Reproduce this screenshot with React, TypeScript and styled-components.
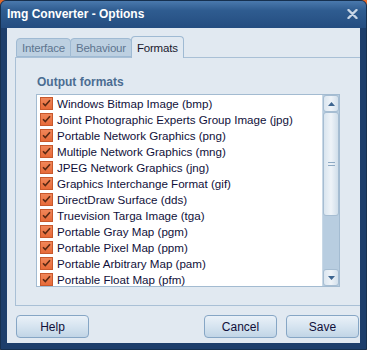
import styled, { createGlobalStyle } from "styled-components";

const GlobalStyle = createGlobalStyle`
  html, body {
    margin: 0;
    padding: 0;
    background: #e0692c;
  }
  * {
    box-sizing: border-box;
  }
`;

const formats = [
  "Windows Bitmap Image (bmp)",
  "Joint Photographic Experts Group Image (jpg)",
  "Portable Network Graphics (png)",
  "Multiple Network Graphics (mng)",
  "JPEG Network Graphics (jng)",
  "Graphics Interchange Format (gif)",
  "DirectDraw Surface (dds)",
  "Truevision Targa Image (tga)",
  "Portable Gray Map (pgm)",
  "Portable Pixel Map (ppm)",
  "Portable Arbitrary Map (pam)",
  "Portable Float Map (pfm)",
];

const Window = styled.div`
  width: 367px;
  height: 350px;
  display: flex;
  flex-direction: column;
  background: #1d3e6b;
  border-radius: 6px 6px 0 0;
  border: 1px solid #16304f;
  overflow: hidden;
  font-family: "Liberation Sans", Arial, sans-serif;
`;

const TitleBar = styled.div`
  height: 27px;
  flex: none;
  display: flex;
  align-items: center;
  justify-content: space-between;
  padding: 0 8px 1px 6px;
  background: linear-gradient(#4a79ad 0%, #2f5c90 35%, #244d80 100%);
`;

const Title = styled.span`
  color: #ffffff;
  font-weight: bold;
  font-size: 12px;
`;

const Client = styled.div`
  flex: 1;
  margin: 0 6px 6px 6px;
  background: #e1e9f1;
  display: flex;
  flex-direction: column;
  overflow: hidden;
`;

const TabStrip = styled.div`
  display: flex;
  align-items: flex-end;
  height: 29px;
  padding-left: 9px;
`;

const Tab = styled.div<{ $active?: boolean }>`
  height: ${({ $active }) => ($active ? "22px" : "19px")};
  padding: 0 5px;
  display: flex;
  align-items: center;
  font-size: 11.5px;
  letter-spacing: -0.2px;
  color: ${({ $active }) => ($active ? "#1a1a2e" : "#5d7590")};
  background: ${({ $active }) => ($active ? "#e1e9f1" : "#bdd0e1")};
  border: 1px solid #9fbad3;
  border-bottom: ${({ $active }) => ($active ? "none" : "1px solid #9fbad3")};
  border-radius: 4px 4px 0 0;
  margin-bottom: ${({ $active }) => ($active ? "-1px" : "0")};
  position: relative;
  z-index: ${({ $active }) => ($active ? 1 : 0)};
  & + & {
    margin-left: -1px;
  }
`;

const Panel = styled.div`
  height: 249px;
  margin: 0 -4px 0 8px;
  border: 1px solid #a9c0d6;
  padding: 17px 0 0 20px;
  display: flex;
  flex-direction: column;
`;

const SectionLabel = styled.div`
  font-size: 12px;
  font-weight: bold;
  color: #4b6d92;
  margin-left: 1px;
  height: 19px;
`;

const ListBox = styled.div`
  width: 304px;
  height: 193px;
  border: 1px solid #a3bbd1;
  background: #ffffff;
  display: flex;
`;

const Items = styled.div`
  flex: 1;
  padding: 0 0 0 3px;
  overflow: hidden;
`;

const Item = styled.div`
  height: 16px;
  display: flex;
  align-items: center;
  gap: 4px;
  font-size: 11.6px;
  color: #10103a;
  white-space: nowrap;
`;

const CheckBox = styled.div`
  width: 13px;
  height: 13px;
  flex: none;
  background: linear-gradient(#f0875a, #e76a38);
  border: 1px solid #c7582c;
  display: flex;
  align-items: center;
  justify-content: center;
`;

const ScrollBar = styled.div`
  width: 17px;
  display: flex;
  flex-direction: column;
  background: #b8cde0;
  border-left: 1px solid #c8d8e6;
`;

const ScrollButton = styled.div`
  height: 17px;
  flex: none;
  background: linear-gradient(90deg, #dbe6f0, #eef3f8 50%, #d3e0ec);
  border: 1px solid #a6bdd2;
  border-radius: 3px;
  display: flex;
  align-items: center;
  justify-content: center;
`;

const Thumb = styled.div`
  height: 104px;
  flex: none;
  background: linear-gradient(90deg, #d9e5ef, #eef3f8 50%, #d0deea);
  border: 1px solid #a6bdd2;
  border-radius: 3px;
  display: flex;
  align-items: center;
  justify-content: center;
`;

const Track = styled.div`
  flex: 1;
`;

const ButtonRow = styled.div`
  display: flex;
  padding: 9px 1px 0 9px;
  gap: 9px;
`;

const Spacer = styled.div`
  flex: 1;
`;

const Button = styled.button`
  width: 73px;
  height: 23px;
  font-family: "Liberation Sans", Arial, sans-serif;
  font-size: 12px;
  color: #10103a;
  background: linear-gradient(#eaf1f8 0%, #d6e4f0 50%, #c1d5e6 100%);
  border: 1px solid #86a6c5;
  border-radius: 4px;
  padding: 0;
`;

function Check() {
  return (
    <svg width="9" height="8" viewBox="0 0 9 8">
      <path d="M1 4.2 L3.3 6.6 L8 1.2" fill="none" stroke="#5a2a14" strokeWidth="1.6" />
    </svg>
  );
}

function Arrow({ down }: { down?: boolean }) {
  return (
    <svg width="7" height="4" viewBox="0 0 7 4">
      <path d={down ? "M0 0 H7 L3.5 4 Z" : "M0 4 H7 L3.5 0 Z"} fill="#3d6590" />
    </svg>
  );
}

function Grip() {
  return (
    <svg width="7" height="4" viewBox="0 0 7 4">
      <path d="M0 0.5 H7 M0 3.5 H7" stroke="#8eaac4" strokeWidth="1" />
    </svg>
  );
}

function CloseIcon() {
  return (
    <svg width="11" height="10" viewBox="0 0 11 10">
      <path d="M1.5 1 L9.5 9 M9.5 1 L1.5 9" stroke="#c9d6e6" strokeWidth="2.4" strokeLinecap="round" />
    </svg>
  );
}

export default function App() {
  return (
    <>
      <GlobalStyle />
      <Window>
        <TitleBar>
          <Title>Img Converter - Options</Title>
          <CloseIcon />
        </TitleBar>
        <Client>
          <TabStrip>
            <Tab>Interface</Tab>
            <Tab>Behaviour</Tab>
            <Tab $active>Formats</Tab>
          </TabStrip>
          <Panel>
            <SectionLabel>Output formats</SectionLabel>
            <ListBox>
              <Items>
                {formats.map((f) => (
                  <Item key={f}>
                    <CheckBox>
                      <Check />
                    </CheckBox>
                    {f}
                  </Item>
                ))}
              </Items>
              <ScrollBar>
                <ScrollButton>
                  <Arrow />
                </ScrollButton>
                <Thumb>
                  <Grip />
                </Thumb>
                <Track />
                <ScrollButton>
                  <Arrow down />
                </ScrollButton>
              </ScrollBar>
            </ListBox>
          </Panel>
          <ButtonRow>
            <Button>Help</Button>
            <Spacer />
            <Button>Cancel</Button>
            <Button>Save</Button>
          </ButtonRow>
        </Client>
      </Window>
    </>
  );
}
